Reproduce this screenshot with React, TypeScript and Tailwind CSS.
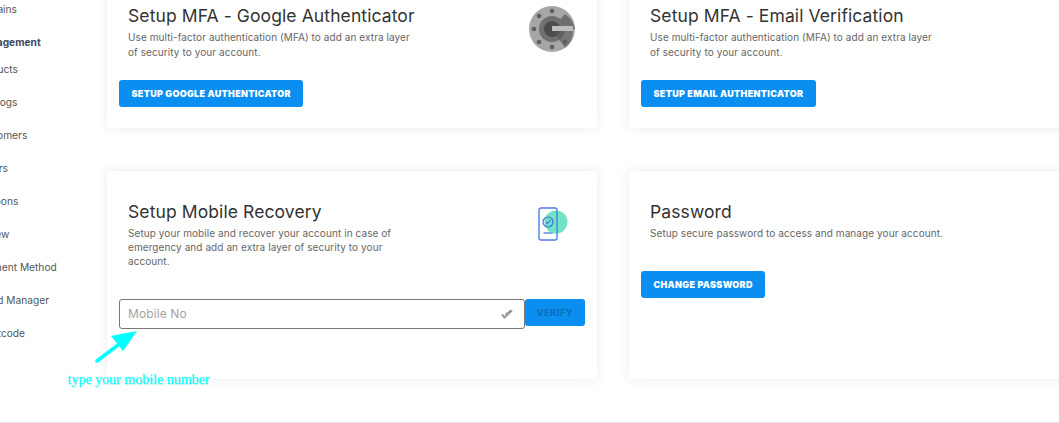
const sideItems = [
  { label: "Domains" },
  { label: "Management", bold: true },
  { label: "Products" },
  { label: "Catalogs" },
  { label: "Customers" },
  { label: "Orders" },
  { label: "Coupons" },
  { label: "Review" },
  { label: "Payment Method" },
  { label: "Brand Manager" },
  { label: "Shortcode" },
];

function Sidebar() {
  return (
    <div className="w-[107px] shrink-0 overflow-hidden">
      <ul className="ml-[-25px] mt-[1px] w-[132px] whitespace-nowrap">
        {sideItems.map((item) => (
          <li
            key={item.label}
            className={
              item.bold
                ? "h-[27px] text-[10.2px] leading-[16px] font-bold text-[#3d4a60]"
                : "h-[33px] text-[10.2px] leading-[16px] text-[#555]"
            }
          >
            {item.label}
          </li>
        ))}
      </ul>
    </div>
  );
}

function BlueButton({ label }: { label: string }) {
  return (
    <button className="h-[27px] rounded-[3px] bg-[#0a8ff0] px-[12.5px] text-[9px] font-black tracking-[0.32px] text-white">
      {label}
    </button>
  );
}

function AuthIcon() {
  return (
    <svg width="46" height="46" viewBox="0 0 46 46" className="shrink-0">
      <circle cx="23" cy="23" r="23" fill="#a6a6a6" />
      <path d="M23 23 L36 8 A23 23 0 0 1 46 23 Z" fill="#6f6f6f" />
      <circle cx="23" cy="23" r="13" fill="#707070" />
      <circle cx="23" cy="23" r="8" fill="#4c4c4c" />
      <path d="M23 23 L44 23 A23 23 0 0 1 36 42 Z" fill="#555" opacity="0.6" />
      <rect x="23" y="20" width="21" height="5" fill="#bdbdbd" />
      <circle cx="23" cy="5" r="2.3" fill="#5f5f5f" />
      <circle cx="10" cy="10" r="2.3" fill="#5f5f5f" />
      <circle cx="5" cy="23" r="2.3" fill="#5f5f5f" />
      <circle cx="10" cy="36" r="2.3" fill="#5f5f5f" />
      <circle cx="23" cy="41" r="2.3" fill="#5f5f5f" />
      <circle cx="36" cy="36" r="2.3" fill="#5f5f5f" />
    </svg>
  );
}

function PhoneIcon() {
  return (
    <svg width="30" height="34" viewBox="0 0 30 34" className="shrink-0">
      <circle cx="18" cy="15" r="11.5" fill="#6fe3c4" />
      <rect x="1" y="1" width="18" height="32" rx="2" fill="none" stroke="#4d7fe8" strokeWidth="1.4" />
      <circle cx="10" cy="15" r="5" fill="none" stroke="#3f74d8" strokeWidth="1.2" />
      <path d="M7.8 15 L9.5 16.8 L12.4 13.4" fill="none" stroke="#3f74d8" strokeWidth="1.1" />
      <path d="M5.5 26 H14.5" stroke="#3f74d8" strokeWidth="1.2" />
    </svg>
  );
}

function CheckIcon() {
  return (
    <svg width="12" height="10" viewBox="0 0 12 10" className="shrink-0">
      <path d="M1 5.5 L3.5 8.5 L11 1.5" fill="none" stroke="#999" strokeWidth="2" />
      <path d="M4 5.5 L10 1" fill="none" stroke="#777" strokeWidth="1" />
    </svg>
  );
}

function Card({
  title,
  desc,
  icon,
  children,
  className,
  descClass,
}: {
  title: string;
  desc: React.ReactNode;
  icon?: React.ReactNode;
  children: React.ReactNode;
  className: string;
  descClass: string;
}) {
  return (
    <div className={`rounded-[3px] bg-white px-3 shadow-[0_0_12px_rgba(120,130,160,0.16)] ${className}`}>
      <div className="flex items-start justify-between pl-[9px]">
        <div>
          <h2 className="text-[17.5px] leading-[22px] tracking-[0.1px] text-[#333]">{title}</h2>
          <p className={`w-[285px] text-[10px] tracking-[0.08px] text-[#666] ${descClass}`}>{desc}</p>
        </div>
        {icon}
      </div>
      {children}
    </div>
  );
}

export default function App() {
  return (
    <div className="relative flex h-[423px] w-[1059px] overflow-hidden bg-white font-['Inter',sans-serif]">
      <Sidebar />
      <div className="flex-1">
        <div className="mt-[-32px] grid h-[455px] w-[1000px] grid-cols-[490px_490px] grid-rows-[160px_208px] gap-x-[32px] gap-y-[43px]">
          <Card
            title="Setup MFA - Google Authenticator"
            desc="Use multi-factor authentication (MFA) to add an extra layer of security to your account."
            icon={<div className="mr-[10px] mt-[1px]"><AuthIcon /></div>}
            className="pt-[37px]"
            descClass="mt-[3px] leading-[15px]"
          >
            <div className="mt-[19px]">
              <BlueButton label="SETUP GOOGLE AUTHENTICATOR" />
            </div>
          </Card>
          <Card
            title="Setup MFA - Email Verification"
            desc="Use multi-factor authentication (MFA) to add an extra layer of security to your account."
            className="pt-[37px]"
            descClass="mt-[3px] leading-[15px]"
          >
            <div className="mt-[19px]">
              <BlueButton label="SETUP EMAIL AUTHENTICATOR" />
            </div>
          </Card>
          <Card
            title="Setup Mobile Recovery"
            desc="Setup your mobile and recover your account in case of emergency and add an extra layer of security to your account."
            icon={<div className="mr-[17px] mt-[6px]"><PhoneIcon /></div>}
            className="pt-[30px]"
            descClass="mt-[3px] leading-[14px]"
          >
            <div className="mt-[31px] flex items-start">
              <div className="flex h-[30px] w-[406px] items-center justify-between rounded-[3px] border border-[#777] pl-2 pr-[11px]">
                <span className="text-[12px] tracking-[0.1px] text-[#a3a3a3]">Mobile No</span>
                <CheckIcon />
              </div>
              <button className="h-[27px] w-[60px] rounded-[3px] bg-[#0a8ff0] text-[9px] font-bold tracking-[0.6px] text-[#0a6cb5]">
                VERIFY
              </button>
            </div>
          </Card>
          <Card
            title="Password"
            desc={<span className="whitespace-nowrap">Setup secure password to access and manage your account.</span>}
            className="pt-[30px]"
            descClass="mt-[3px] leading-[14px]"
          >
            <div className="mt-[30px]">
              <BlueButton label="CHANGE PASSWORD" />
            </div>
          </Card>
        </div>
      </div>

      {/* annotation drawn over the form */}
      <svg width="60" height="50" viewBox="0 0 60 50" className="absolute left-[90px] top-[325px]">
        <path d="M7 36 L32 17" stroke="#00ffff" strokeWidth="3.5" strokeLinecap="round" />
        <path d="M47 6 L21 11 L33 26 Z" fill="#00ffff" />
      </svg>
      <span className="absolute left-[67.5px] top-[371px] font-['Liberation_Serif',serif] text-[14px] leading-[17px] text-[#00ffff] [text-shadow:1px_1px_1px_rgba(0,200,200,0.35)]">
        type your mobile number
      </span>

      <div className="absolute bottom-0 left-0 h-px w-full bg-[#e4e6ea]" />
    </div>
  );
}
